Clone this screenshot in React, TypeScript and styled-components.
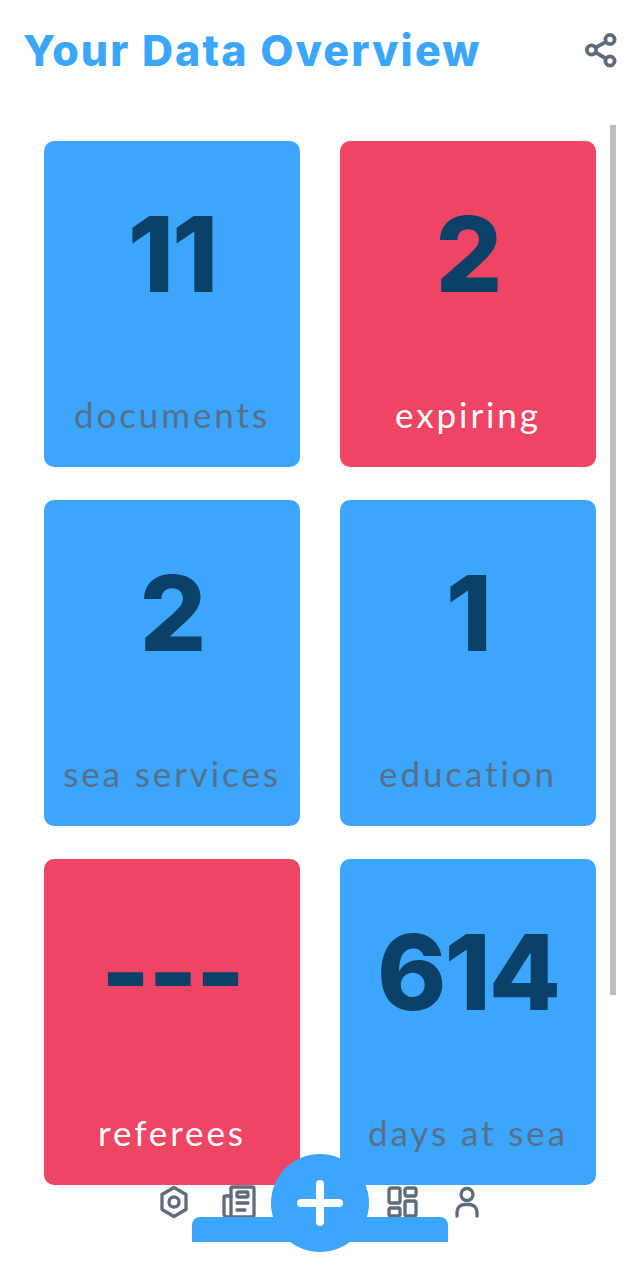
import React from "react";
import styled, { createGlobalStyle } from "styled-components";

const GlobalStyle = createGlobalStyle`
  html, body {
    margin: 0;
    padding: 0;
    background: #fff;
  }
  body {
    font-family: Inter, Lato, sans-serif;
  }
`;

const BLUE = "#3ca6fc";
const RED = "#ef4565";
const SLATE = "#5f6b7a";

const Page = styled.div`
  width: 640px;
  height: 1282px;
  overflow: hidden;
  background: #fff;
`;

const Header = styled.header`
  display: flex;
  align-items: center;
  justify-content: space-between;
  height: 100px;
  padding: 0 22px 0 23px;
  box-sizing: border-box;
`;

const Title = styled.h1`
  margin: 0;
  font-family: Inter, sans-serif;
  font-size: 43px;
  font-weight: 800;
  letter-spacing: 2.1px;
  white-space: nowrap;
  color: ${BLUE};
`;

const Content = styled.main`
  position: relative;
  padding: 41px 0 0 44px;
`;

const Grid = styled.div`
  display: grid;
  grid-template-columns: 256px 256px;
  grid-auto-rows: 326px;
  column-gap: 40px;
  row-gap: 33px;
`;

const Card = styled.section<{ $alert?: boolean }>`
  display: flex;
  flex-direction: column;
  align-items: center;
  border-radius: 10px;
  background: ${(p) => (p.$alert ? RED : BLUE)};
`;

const Count = styled.div`
  margin-top: 53px;
  height: 120px;
  font-family: Inter, sans-serif;
  font-size: 105px;
  font-weight: 800;
  letter-spacing: -2px;
  line-height: 120px;
  color: #0b4069;
`;

const Label = styled.div<{ $alert?: boolean }>`
  margin-top: auto;
  margin-bottom: 31px;
  font-family: Lato, sans-serif;
  font-size: 35px;
  line-height: 44px;
  letter-spacing: 2.9px;
  color: ${(p) => (p.$alert ? "#fff" : "#56708c")};
`;

const Scrollbar = styled.div`
  position: absolute;
  top: 25px;
  left: 610px;
  width: 6px;
  height: 870px;
  background: #bdbdbd;
`;

const TabBar = styled.nav`
  position: relative;
  display: flex;
  justify-content: center;
  height: 98px;
  margin-top: -31px;
`;

const IconGroup = styled.div`
  display: flex;
  align-items: flex-start;
  gap: 31px;
  padding-top: 31px;
`;

const TabIcon = styled.svg`
  width: 34px;
  height: 34px;
  fill: none;
  stroke: ${SLATE};
  stroke-width: 3.3;
  stroke-linecap: round;
  stroke-linejoin: round;
`;

const AddSlot = styled.div`
  position: relative;
  display: flex;
  justify-content: center;
  width: 129px;
`;

const Ledge = styled.div`
  position: absolute;
  left: -64px;
  top: 63px;
  width: 256px;
  height: 25px;
  border-radius: 8px 8px 0 0;
  background: ${BLUE};
`;

const AddButton = styled.button`
  position: relative;
  width: 98px;
  height: 98px;
  padding: 0;
  border: none;
  border-radius: 50%;
  display: flex;
  align-items: center;
  justify-content: center;
  background: ${BLUE};
`;

const ShareIcon = () => (
  <svg width="34" height="36" viewBox="0 0 34 36" fill="none" stroke={SLATE} strokeWidth="3.8">
    <circle cx="26" cy="7.5" r="4.6" />
    <circle cx="7.5" cy="18" r="4.6" />
    <circle cx="26" cy="29" r="4.6" />
    <path d="M11.5 15.7 22 9.8M11.5 20.3 22 26.5" />
  </svg>
);

const stats = [
  { count: "11", label: "documents" },
  { count: "2", label: "expiring", alert: true },
  { count: "2", label: "sea services" },
  { count: "1", label: "education" },
  { count: "---", label: "referees", alert: true },
  { count: "614", label: "days at sea" },
];

export default function App() {
  return (
    <Page>
      <GlobalStyle />
      <Header>
        <Title>Your Data Overview</Title>
        <ShareIcon />
      </Header>
      <Content>
        <Grid>
          {stats.map((s) => (
            <Card key={s.label} $alert={s.alert}>
              <Count>{s.count}</Count>
              <Label $alert={s.alert}>{s.label}</Label>
            </Card>
          ))}
        </Grid>
        <Scrollbar />
      </Content>
      <TabBar>
        <IconGroup>
          <TabIcon viewBox="0 0 34 34">
            <path d="M17 2.5 29 9.5v15L17 31.5 5 24.5v-15z" />
            <circle cx="17" cy="17" r="5" />
          </TabIcon>
          <TabIcon viewBox="0 0 34 34">
            <path d="M9 3.5a1.5 1.5 0 0 1 1.5-1.5h20a1.5 1.5 0 0 1 1.5 1.5v27a1.5 1.5 0 0 1-1.5 1.5H5a3 3 0 0 1-3-3V12.5A1.5 1.5 0 0 1 3.5 11H9" />
            <path d="M9 3.5V32" />
            <rect x="15" y="7" width="11" height="5" rx="1.5" />
            <path d="M15 18h11M15 25h8" />
          </TabIcon>
        </IconGroup>
        <AddSlot>
          <Ledge />
          <AddButton aria-label="add">
            <svg width="48" height="48" viewBox="0 0 48 48" fill="none" stroke="#fff" strokeWidth="8" strokeLinecap="round">
              <path d="M24 5v38M5 24h38" />
            </svg>
          </AddButton>
        </AddSlot>
        <IconGroup>
          <TabIcon viewBox="0 0 34 34">
            <rect x="4" y="3" width="11" height="15" rx="2" />
            <rect x="20" y="3" width="11" height="8" rx="2" />
            <rect x="20" y="16" width="11" height="15" rx="2" />
            <rect x="4" y="23" width="11" height="8" rx="2" />
          </TabIcon>
          <TabIcon viewBox="0 0 34 34">
            <circle cx="17" cy="9.5" r="6" />
            <path d="M7 31v-4a7.5 7.5 0 0 1 7.5-7.5h5A7.5 7.5 0 0 1 27 27v4" />
          </TabIcon>
        </IconGroup>
      </TabBar>
    </Page>
  );
}
